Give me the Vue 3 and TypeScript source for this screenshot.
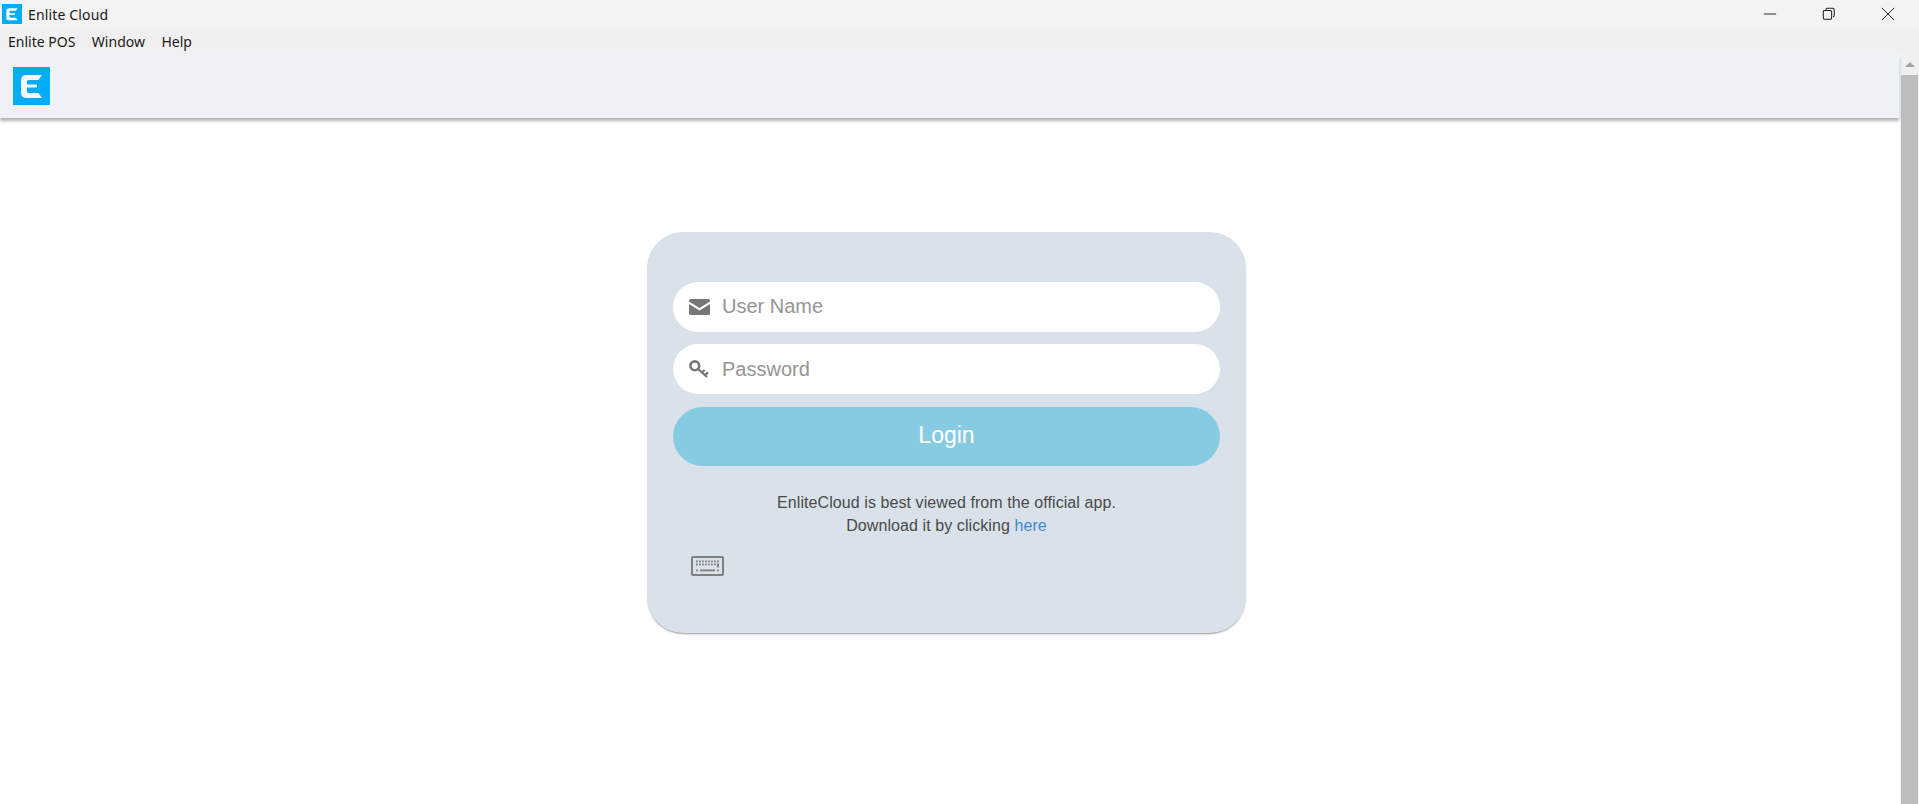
<script setup lang="ts">
const menus: string[] = ['Enlite POS', 'Window', 'Help']
const keyRows: number[][] = [
  [5, 8, 11, 14, 17, 20, 23, 26],
  [5, 8, 11, 14, 17, 20, 23],
]
const logoPath = 'M13.5 8H29L25.5 13H15.5Q14 13 14 14.5V17.6H24V20.6H14V24.5Q14 26 15.5 26H25.5L29 31H13.5Q8 31 8 25.5V13.5Q8 8 13.5 8Z'
</script>

<template>
  <div class="window">
    <div class="titlebar">
      <div class="title-left">
        <svg class="logo-small" viewBox="0 0 37 38" preserveAspectRatio="none">
          <rect width="37" height="38" fill="#03adf5" />
          <path :d="logoPath" fill="#fff" />
        </svg>
        <span class="title-text">Enlite Cloud</span>
      </div>
      <div class="window-controls">
        <svg class="ctl" viewBox="0 0 16 16"><path d="M1 8H15" stroke="#222" stroke-width="1.1" fill="none" /></svg>
        <svg class="ctl" viewBox="0 0 16 16"><path d="M4.5 3.5V3Q4.5 1.5 6 1.5H12Q14 1.5 14 3.5V9.5Q14 11 12.5 11M2.5 4H9.5Q11 4 11 5.5V12.5Q11 14 9.5 14H3Q1.5 14 1.5 12.5V5Q1.5 4 2.5 4Z" stroke="#222" stroke-width="1.2" fill="none" /></svg>
        <svg class="ctl" viewBox="0 0 16 16"><path d="M1 1L15 15M15 1L1 15" stroke="#222" stroke-width="1.1" fill="none" /></svg>
      </div>
    </div>
    <div class="menubar">
      <span v-for="m in menus" :key="m" class="menu-item">{{ m }}</span>
    </div>
    <div class="content">
      <div class="page">
        <header class="app-header">
          <svg class="logo-large" viewBox="0 0 37 38">
            <rect width="37" height="38" fill="#03adf5" />
            <path :d="logoPath" fill="#f2f8fc" />
          </svg>
        </header>
        <main class="login-area">
          <form class="card" @submit.prevent>
            <label class="field">
              <svg class="field-icon" viewBox="0 0 21 16">
                <path d="M1.5 0H19.5Q21 0 21 1.5V2.5L10.5 9L0 2.5V1.5Q0 0 1.5 0ZM0 5L10.5 11.5L21 5V14.5Q21 16 19.5 16H1.5Q0 16 0 14.5Z" fill="#777" />
              </svg>
              <input class="field-input field-user" type="text" placeholder="User Name" />
            </label>
            <label class="field">
              <svg class="field-icon" viewBox="0 0 21 18">
                <circle cx="5.8" cy="5.8" r="4.4" fill="none" stroke="#777" stroke-width="2.6" />
                <path d="M9 9L18 17M13 12.5L15.6 10M16 15.2L19 12.4" fill="none" stroke="#777" stroke-width="2.3" />
              </svg>
              <input class="field-input" type="password" placeholder="Password" />
            </label>
            <button class="login-btn" type="submit">Login</button>
            <p class="note">
              EnliteCloud is best viewed from the official app.<br />
              Download it by clicking <a class="note-link" href="#">here</a>
            </p>
            <svg class="keyboard" viewBox="0 0 33 20">
              <rect x="1" y="1" width="31" height="18" rx="1" fill="none" stroke="#808080" stroke-width="2" />
              <g v-for="(row, i) in keyRows" :key="i">
                <rect v-for="x in row" :key="x" :x="x" :y="4.5 + i * 3" width="1.8" height="1.8" fill="#808080" />
              </g>
              <rect x="26" y="7.5" width="2" height="4" fill="#808080" />
              <rect x="5" y="13.5" width="1.8" height="1.8" fill="#808080" />
              <rect x="9" y="13.5" width="15" height="1.8" fill="#808080" />
              <rect x="26" y="13.5" width="1.8" height="1.8" fill="#808080" />
            </svg>
          </form>
        </main>
      </div>
      <div class="scrollbar">
        <div class="arrow"></div>
        <div class="thumb"></div>
      </div>
    </div>
  </div>
</template>

<style>
html, body { margin: 0; padding: 0; overflow: hidden; background: #fff; }
</style>

<style scoped>
.window {
  width: 1919px;
  height: 804px;
  display: flex;
  flex-direction: column;
  overflow: hidden;
  font-family: "Liberation Sans", Arial, sans-serif;
}
.titlebar {
  height: 29px;
  flex: none;
  background: #f3f3f3;
  display: flex;
  align-items: center;
  justify-content: space-between;
}
.title-left { display: flex; align-items: center; padding-left: 2px; margin-top: -1px; }
.logo-small { width: 20px; height: 20px; display: block; }
.title-text {
  margin-left: 6px;
  font: 14px "Noto Sans", sans-serif;
  letter-spacing: 0.15px;
  color: #1a1a1a;
}
.window-controls { display: flex; gap: 45px; padding-right: 24px; margin-top: -1px; }
.ctl { width: 14px; height: 14px; display: block; }
.menubar {
  height: 25px;
  flex: none;
  background: #f0f0f0;
  display: flex;
  align-items: center;
  gap: 16.5px;
  padding-left: 8px;
  font: 14px "Noto Sans", sans-serif;
  color: #1a1a1a;
}
.content { flex: 1; display: flex; min-height: 0; background: #f0f0f0; }
.page {
  width: 1900px;
  flex: none;
  background: #fff;
  display: flex;
  flex-direction: column;
}
.app-header {
  position: relative;
  z-index: 1;
  height: 64px;
  flex: none;
  box-sizing: border-box;
  margin-right: 1px;
  background: #eef1f6;
  padding: 13px 0 0 13px;
  box-shadow: 0 3px 3px rgba(0, 0, 0, 0.3);
}
.logo-large { width: 37px; height: 38px; display: block; }
.login-area { flex: 1; padding: 114px 7px 0 0; display: flex; justify-content: center; background: #fff; }
.card {
  width: 599px;
  height: 401px;
  box-sizing: border-box;
  padding: 50px 26px 0;
  background: #d9e1ea;
  border-radius: 36px;
  box-shadow: 0 2px 2px -1px rgba(0, 0, 0, 0.4);
  display: flex;
  flex-direction: column;
}
.field {
  height: 50px;
  flex: none;
  background: #fff;
  border-radius: 25px;
  display: flex;
  align-items: center;
  padding-left: 16px;
  margin-bottom: 12px;
}
.field-icon { width: 21px; height: 18px; flex: none; display: block; }
.field-input {
  flex: 1;
  min-width: 0;
  margin-left: 12px;
  border: 0;
  outline: 0;
  background: transparent;
  font: 20px "Liberation Sans", Arial, sans-serif;
  color: #555;
  padding: 0;
}
.field-user { padding-bottom: 1px; }
.field-input::placeholder { color: #949494; opacity: 1; }
.login-btn {
  height: 59px;
  flex: none;
  margin-top: 1px;
  border: 0;
  border-radius: 30px;
  background: #87cbe2;
  color: #fff;
  font: 23px "Liberation Sans", Arial, sans-serif;
  padding: 0 0 2px;
}
.note {
  margin: 25px 0 0;
  text-align: center;
  font-size: 16px;
  letter-spacing: 0.08px;
  line-height: 23px;
  color: #4a4a4a;
}
.note-link { color: #3d8bd0; text-decoration: none; }
.keyboard { width: 33px; height: 20px; display: block; margin: 19px 0 0 18px; }
.scrollbar { width: 19px; flex: none; }
.arrow {
  width: 0;
  height: 0;
  margin: 8px auto 0;
  border-left: 5px solid transparent;
  border-right: 5px solid transparent;
  border-bottom: 5px solid #a3a3a3;
}
.thumb { height: 800px; width: 17px; margin: 8px 0 0 1px; background: #bdbdbd; }
</style>
